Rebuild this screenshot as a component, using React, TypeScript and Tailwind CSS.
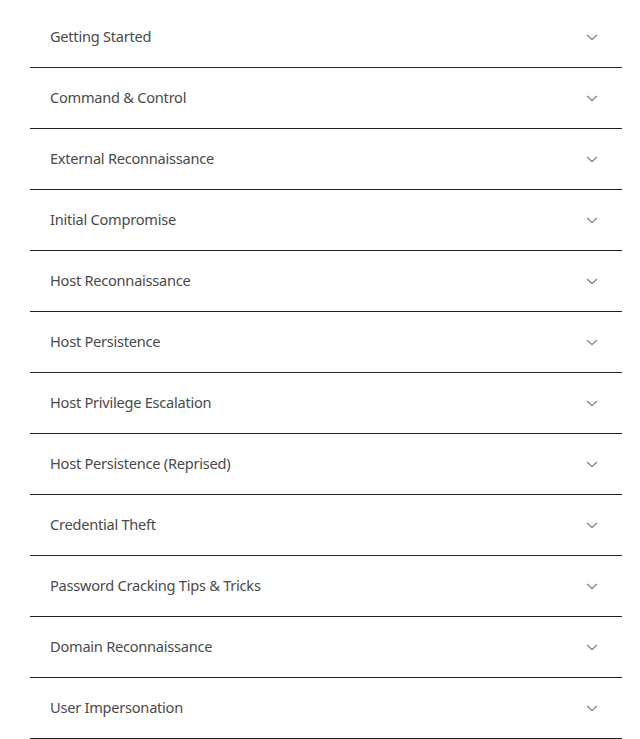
import React from "react";

const items = [
  "Getting Started",
  "Command & Control",
  "External Reconnaissance",
  "Initial Compromise",
  "Host Reconnaissance",
  "Host Persistence",
  "Host Privilege Escalation",
  "Host Persistence (Reprised)",
  "Credential Theft",
  "Password Cracking Tips & Tricks",
  "Domain Reconnaissance",
  "User Impersonation",
];

function Chevron() {
  return (
    <svg width="12" height="7" viewBox="0 0 12 7" fill="none">
      <path d="M1 1l5 4.5L11 1" stroke="#8a8a8a" strokeWidth="1.4" />
    </svg>
  );
}

export default function App() {
  return (
    <div className="bg-white min-h-[739px] pl-[30px] pr-[18px] pt-[7px]" style={{ fontFamily: '"Source Sans Pro", "Noto Sans", sans-serif' }}>
      {items.map((t) => (
        <div key={t} className="flex h-[61px] items-center justify-between border-b border-[#222] pl-5 pr-6">
          <span className="text-[14.6px] text-[#4a4a4a] tracking-[-0.25px]">{t}</span>
          <Chevron />
        </div>
      ))}
    </div>
  );
}
